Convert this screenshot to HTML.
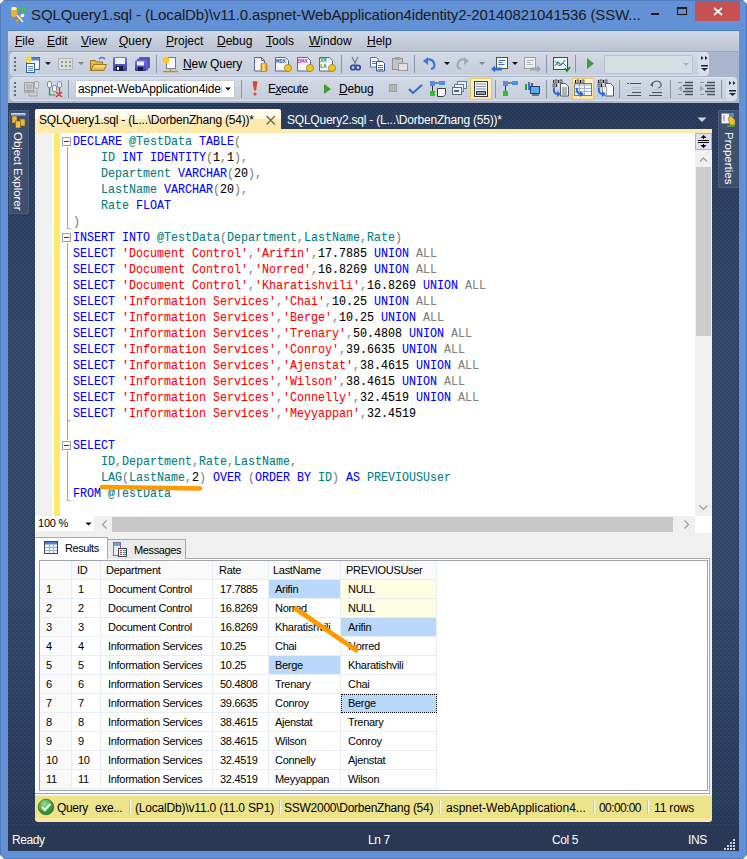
<!DOCTYPE html>
<html><head><meta charset="utf-8">
<style>
*{margin:0;padding:0;box-sizing:border-box}
html,body{width:747px;height:859px;overflow:hidden}
body{position:relative;background:#6391d5;font-family:"Liberation Sans",sans-serif;font-size:12px;color:#000}
.a{position:absolute}
#title{left:31px;top:6px;font-size:15px;letter-spacing:-0.12px;color:#1a1a1a;white-space:nowrap}
#client{left:8px;top:31px;width:731px;height:820px;background:#293955;box-shadow:0 -1px 0 #5080c4}
#menubar{left:8px;top:31px;width:731px;height:20px;background:linear-gradient(#d3d9e4,#b9c2d3)}
#menubar span{position:absolute;top:3px;font-size:12px;white-space:nowrap}
#tbarea{left:8px;top:52px;width:731px;height:50px;background:#c5cddb}
.tb{position:absolute;background:#cfd6e5;border-radius:3px;border:1px solid #e3e7ef;border-right-color:#b9c2d3;border-bottom-color:#b9c2d3}
#editor{left:35px;top:133px;width:677px;height:383px;background:#fff}
#gutter{left:35px;top:133px;width:17px;height:383px;background:#f0f0f0}
#chg{left:54px;top:133px;width:6px;height:383px;background:#ffe965}
#code{left:73px;top:134px;font-family:"Liberation Mono",monospace;font-size:13.5px;line-height:16px;white-space:pre;transform:scaleX(0.86407);transform-origin:0 0;width:800px;height:384px;-webkit-text-stroke:0.1px}
.cl{position:absolute;left:0;height:16px;white-space:pre}
.cl b{font-weight:normal}
.k{color:#0000ff}.i{color:#008080}.p{color:#808080}.s{color:#ff0000}
#vscroll{left:695px;top:133px;width:17px;height:383px;background:#f0f0f0}
#hstrip{left:35px;top:516px;width:677px;height:17px;background:#f0f0f0}
#results{left:35px;top:533px;width:677px;height:263px;background:#f0f0f0}
#grid{left:39px;top:560px;width:669px;height:231px;background:#fff;border:1px solid #a0a4ae}
.gr{position:absolute;left:0;height:19px;width:397px}
.gr span{position:absolute;top:0;height:19px;line-height:19px;font-size:11px;letter-spacing:-0.3px;white-space:nowrap;padding-left:6px;border-right:1px solid #e8eef6;border-bottom:1px solid #e8eef6}
.gr .c0{left:0;width:32px;background:#f9f9f9;padding-left:6px}
.gr .c1{left:32px;width:29px;padding-left:6px}
.gr .c2{left:61px;width:112px;padding-left:7px}
.gr .c3{left:173px;width:56px;padding-left:7px}
.gr .c4{left:229px;width:72px;padding-left:6px}
.gr .c5{left:301px;width:96px;padding-left:7px}
.gh span{background:#f9f9fa!important;padding-left:5px!important}
.gh .c1{padding-left:5px!important}.gh .c3{padding-left:6px!important}.gh .c4{padding-left:4px!important}
.hb{background:#bad9fa!important}.hy{background:#fdfde4!important}
.fc{outline:1px dotted #000;outline-offset:-1px}
#status{left:35px;top:796px;width:677px;height:26px;background:linear-gradient(#ede38a 0,#ede38a 84%,#fde6a2 84%,#fde6a2 100%);border-radius:0 0 3px 3px}
#statusbar span{position:absolute;color:#fff;font-size:12px;letter-spacing:-0.4px;top:833px}
</style></head><body>
<div class="a" id="client"></div>
<svg class="a" style="left:8px;top:102px" width="731" height="724"><defs><linearGradient id="envg" x1="0" y1="0" x2="0" y2="1"><stop offset="0" stop-color="#293955"/><stop offset="0.3" stop-color="#35496a"/><stop offset="0.7" stop-color="#35496a"/><stop offset="1" stop-color="#293955"/></linearGradient><pattern id="dots" width="4" height="4" patternUnits="userSpaceOnUse"><rect x="0" y="2" width="1" height="1" fill="#374b6d"/><rect x="2" y="0" width="1" height="1" fill="#374b6d"/><rect x="2" y="3" width="1" height="1" fill="#25344f"/><rect x="0" y="1" width="1" height="1" fill="#25344f"/></pattern></defs><rect width="731" height="724" fill="url(#envg)"/><rect width="731" height="724" fill="url(#dots)"/></svg>
<div class="a" style="left:9px;top:110px;width:20px;height:104px;background:#3e4f70;border:1px solid #4a5d80;border-radius:1px"></div>
<svg class="a" style="left:10px;top:112px" width="17" height="16">
<rect x="1" y="1" width="15" height="3" fill="#5b8ee0"/><rect x="1" y="1" width="14" height="1.5" fill="#c8d8f0"/>
<rect x="2" y="4" width="5" height="7" fill="#e8b83a" stroke="#7a5a10" stroke-width="0.6"/>
<rect x="10" y="7" width="5" height="7" fill="#e8b83a" stroke="#7a5a10" stroke-width="0.6"/>
<rect x="5.5" y="9" width="5" height="7" fill="#f0c040" stroke="#7a5a10" stroke-width="0.6"/>
</svg>
<div class="a" style="left:9px;top:132px;width:18px;height:82px;writing-mode:vertical-rl;font-size:11.6px;color:#fff;letter-spacing:-0.1px;line-height:18px;white-space:nowrap">Object Explorer</div>
<div class="a" style="left:718px;top:110px;width:21px;height:78px;background:#3e4f70;border:1px solid #4a5d80;border-right:none"></div>
<svg class="a" style="left:721px;top:112px" width="15" height="16">
<rect x="0.5" y="1.5" width="8" height="10" fill="#f4f6fa" stroke="#8090a8" stroke-width="0.8"/>
<path d="M2 4h2M2 6h2M2 8h2" stroke="#6080b0"/>
<rect x="8" y="1" width="5" height="4" fill="#5a8ad8"/>
<path d="M7 6l3-2 4 4v5h-5z" fill="#f0c030" stroke="#8a6a10" stroke-width="0.6"/>
<rect x="6" y="13" width="8" height="2" fill="#3aa040"/>
</svg>
<div class="a" style="left:719px;top:132px;width:19px;height:54px;writing-mode:vertical-rl;font-size:11.5px;color:#fff;line-height:19px;white-space:nowrap">Properties</div>
<div class="a" id="title">SQLQuery1.sql - (LocalDb)\v11.0.aspnet-WebApplication4identity2-20140821041536 (SSW...</div>
<div class="a" style="left:695px;top:1px;width:45px;height:20px;background:#c75050"></div>
<svg class="a" style="left:0;top:0" width="747" height="30">
<path d="M714 8l8 7M722 8l-8 7" stroke="#fff" stroke-width="1.7"/>
<rect x="651" y="13" width="8" height="2" fill="#1a1a1a"/>
<rect x="677.5" y="7.5" width="9" height="7" fill="none" stroke="#1a1a1a" stroke-width="1.1"/><rect x="677" y="7" width="10" height="2" fill="#1a1a1a"/>

<rect x="11" y="7" width="6" height="10" rx="2" fill="#e8b030"/><rect x="11.5" y="7" width="5" height="3" rx="1.5" fill="#fff0b0"/>
<g fill="#3ad040"><rect x="18" y="8" width="1" height="1"/><rect x="20" y="8" width="1" height="1"/><rect x="22" y="8" width="1" height="1"/><rect x="24" y="8" width="1" height="1"/><rect x="24" y="10" width="1" height="1"/><rect x="24" y="12" width="1" height="1"/><rect x="11" y="18" width="1" height="1"/><rect x="11" y="20" width="1" height="1"/><rect x="11" y="22" width="1" height="1"/><rect x="13" y="22" width="1" height="1"/></g>
<path d="M16 22l7-7" stroke="#d8a020" stroke-width="1.8"/><path d="M17 15l6 7" stroke="#f0f0f0" stroke-width="1.5"/><circle cx="22.5" cy="15.5" r="1.8" fill="#fff"/>
</svg>
<div class="a" id="menubar">
<span style="left:7px"><u>F</u>ile</span>
<span style="left:39px"><u>E</u>dit</span>
<span style="left:73px"><u>V</u>iew</span>
<span style="left:111px"><u>Q</u>uery</span>
<span style="left:158px"><u>P</u>roject</span>
<span style="left:209px"><u>D</u>ebug</span>
<span style="left:258px"><u>T</u>ools</span>
<span style="left:301px"><u>W</u>indow</span>
<span style="left:359px"><u>H</u>elp</span>
</div>
<svg class="a" style="left:0;top:0" width="747" height="103">
<defs>
<linearGradient id="tbg" x1="0" y1="0" x2="0" y2="1"><stop offset="0" stop-color="#d3d9e5"/><stop offset="1" stop-color="#c5cddb"/></linearGradient>
<linearGradient id="fold" x1="0" y1="0" x2="0" y2="1"><stop offset="0" stop-color="#fde9a0"/><stop offset="1" stop-color="#e0a830"/></linearGradient>
<linearGradient id="cyl" x1="0" y1="0" x2="1" y2="0"><stop offset="0" stop-color="#c88a10"/><stop offset="0.4" stop-color="#ffe27a"/><stop offset="1" stop-color="#d09018"/></linearGradient>
<linearGradient id="disk" x1="0" y1="0" x2="0" y2="1"><stop offset="0" stop-color="#7878e0"/><stop offset="1" stop-color="#3838a8"/></linearGradient>
<linearGradient id="hl" x1="0" y1="0" x2="0" y2="1"><stop offset="0" stop-color="#fff6d0"/><stop offset="1" stop-color="#ffe49a"/></linearGradient>
</defs>
<!-- toolbar area background -->
<rect x="8" y="52" width="731" height="51" fill="#a9b5ca"/>
<rect x="8" y="51" width="731" height="1" fill="#9ba7bc"/>
<!-- toolbar 1 -->
<rect x="10.5" y="52.5" width="698" height="23" rx="3" fill="url(#tbg)" stroke="#dde2ec"/>
<rect x="698" y="53" width="10" height="22" rx="2" fill="#d8dde8"/>
<!-- toolbar 2 -->
<rect x="10.5" y="77.5" width="726" height="23" rx="3" fill="url(#tbg)" stroke="#dde2ec"/>
<rect x="726" y="78" width="10" height="22" rx="2" fill="#d8dde8"/>
<!-- grips -->
<g fill="#5f6e88">
<rect x="14" y="57" width="2" height="2"/><rect x="14" y="61" width="2" height="2"/><rect x="14" y="65" width="2" height="2"/><rect x="14" y="69" width="2" height="2"/>
<rect x="14" y="82" width="2" height="2"/><rect x="14" y="86" width="2" height="2"/><rect x="14" y="90" width="2" height="2"/><rect x="14" y="94" width="2" height="2"/>
</g>
<!-- separators -->
<g stroke="#8794aa" stroke-width="1">
<path d="M156.5 55v18M341.5 55v18M414.5 55v18M546.5 55v18M575.5 55v18"/>
<path d="M68.5 80v18M241.5 80v18M495.5 80v18M546.5 80v18M619.5 80v18M670.5 80v18M721.5 80v18"/>
</g>
<!-- overflow chevrons -->
<g fill="#1a2540">
<path d="M701 56l2.5 2-2.5 2zM705 56l2.5 2-2.5 2z"/><rect x="701" y="65" width="7" height="1.5"/><path d="M701 68h7l-3.5 3z"/>
<path d="M729 81l2.5 2-2.5 2zM733 81l2.5 2-2.5 2z"/><rect x="729" y="90" width="7" height="1.5"/><path d="M729 93h7l-3.5 3z"/>
</g>
<!-- new project -->
<rect x="26.5" y="57.5" width="13" height="12" fill="#f4f7fc" stroke="#4a6aa8"/><rect x="27" y="58" width="12" height="2.5" fill="#4d86e0"/>
<circle cx="28.5" cy="59.5" r="3.2" fill="#ffd93a"/>
<rect x="26.5" y="63.5" width="8" height="9" fill="#fff" stroke="#3a5aa0"/><path d="M28 66.5h5M28 68.5h5M28 70.5h5" stroke="#4a78d0" stroke-width="0.9"/>
<path d="M45 62h6l-3 3z" fill="#111"/>
<!-- disabled icon -->
<rect x="58.5" y="58.5" width="14" height="11" fill="#dcdcdc" stroke="#b4b4b4"/><g fill="#9a9a9a"><rect x="61" y="61" width="2" height="2"/><rect x="65" y="61" width="2" height="2"/><rect x="69" y="61" width="2" height="2"/><rect x="61" y="65" width="2" height="2"/><rect x="65" y="65" width="2" height="2"/><rect x="69" y="65" width="2" height="2"/></g>
<path d="M78 62h6l-3 3z" fill="#7c8596"/>
<!-- folder -->
<path d="M90.5 60.5h5l1 1.5h6v8.5h-12z" fill="#e8b840" stroke="#9a7420"/>
<path d="M91 70.5l2.5-6h13l-2.5 6z" fill="url(#fold)" stroke="#a07a20"/>
<path d="M99 59q3-3 6 0" fill="none" stroke="#4a6eb0" stroke-width="1.3"/>
<!-- save -->
<rect x="113" y="57" width="14" height="14" rx="1" fill="url(#disk)"/><rect x="115" y="58" width="10" height="6" fill="#f0f0f8"/><rect x="116" y="66" width="7" height="5" fill="#1a1a40"/><rect x="117" y="67" width="2" height="3" fill="#fff"/>
<!-- save all -->
<rect x="139" y="57" width="11" height="11" rx="1" fill="#5a5ac8"/><rect x="137" y="59" width="11" height="11" rx="1" fill="#6464d0" stroke="#3a3aa0" stroke-width="0.6"/><rect x="135" y="60.5" width="11" height="10.5" rx="1" fill="url(#disk)"/><rect x="137" y="61.5" width="7" height="4" fill="#f0f0f8"/><rect x="138" y="67" width="5" height="4" fill="#1a1a40"/>
<!-- new query icon -->
<rect x="166.5" y="57.5" width="9" height="11" fill="#fafafa" stroke="#6a7a98"/><circle cx="166" cy="60" r="3.2" fill="#ffc72a"/><path d="M163 71.5h15" stroke="#c8901a" stroke-width="1.5"/><path d="M170.5 68.5v3" stroke="#c8901a" stroke-width="1.5"/>
<!-- doc + cylinder -->
<path d="M254.5 57.5h7l3 3v10.5h-10z" fill="#f4f6fb" stroke="#5a6a88"/><path d="M261.5 57.5v3h3" fill="none" stroke="#5a6a88"/><rect x="261" y="63" width="6" height="8.5" rx="1.5" fill="url(#cyl)" stroke="#9a6a10" stroke-width="0.6"/>
<!-- MDX DMX XMLA -->
<g font-family="Liberation Mono" font-size="5.5" font-weight="bold">
<path d="M275.5 57.5h10l3 3v10.5h-13z" fill="#f4f6fb" stroke="#5a6a88"/><text x="276" y="63" fill="#2a5ab8">MDX</text><circle cx="288" cy="68" r="3.6" fill="#f2c51a" stroke="#8a6a10" stroke-width="0.6"/>
<path d="M297.5 57.5h10l3 3v10.5h-13z" fill="#f4f6fb" stroke="#5a6a88"/><text x="298" y="63" fill="#c030b0">DMX</text><circle cx="310" cy="68" r="3.6" fill="#f2c51a" stroke="#8a6a10" stroke-width="0.6"/>
<path d="M319.5 57.5h10l3 3v10.5h-13z" fill="#f4f6fb" stroke="#5a6a88"/><text x="320" y="62" fill="#20a050">XM</text><text x="320" y="68" fill="#20a050">LA</text><circle cx="332" cy="68" r="3.6" fill="#f2c51a" stroke="#8a6a10" stroke-width="0.6"/>
</g>
<!-- scissors -->
<path d="M352 57l4 8M358 57l-4 8" stroke="#7a8090" stroke-width="1.3"/><circle cx="353" cy="67.5" r="2.3" fill="none" stroke="#2a4aa0" stroke-width="1.6"/><circle cx="358" cy="67.5" r="2.3" fill="none" stroke="#2a4aa0" stroke-width="1.6"/>
<!-- copy -->
<path d="M370.5 57.5h6l2 2v7.5h-8z" fill="#fff" stroke="#5070b0"/><path d="M372 61.5h4M372 63.5h4" stroke="#3a68c8" stroke-width="0.9"/>
<path d="M376.5 61.5h6l2 2v7.5h-8z" fill="#fff" stroke="#2a4aa0"/><path d="M378 65.5h5M378 67.5h5M378 69.5h5" stroke="#3a68c8" stroke-width="0.9"/>
<!-- paste gray -->
<rect x="392.5" y="58.5" width="10" height="11" fill="#c4c4c4" stroke="#909090"/><rect x="395" y="57" width="5" height="3" fill="#a0a0a0"/><rect x="398.5" y="63.5" width="9" height="7" fill="#e0e0e0" stroke="#999"/>
<!-- undo -->
<path d="M426 60q6-2 8 3t-3 6" fill="none" stroke="#3a78e0" stroke-width="2.2"/><path d="M423 61l5-4v8z" fill="#3a78e0"/>
<path d="M444 62h6l-3 3z" fill="#111"/>
<!-- redo gray -->
<path d="M466 60q-6-2-8 3t3 6" fill="none" stroke="#a4a8b0" stroke-width="2.2"/><path d="M469 61l-5-4v8z" fill="#a4a8b0"/>
<path d="M479 62h6l-3 3z" fill="#7c8596"/>
<!-- nav back -->
<rect x="496.5" y="57.5" width="11" height="11" fill="#fafafa" stroke="#505050"/><path d="M498.5 60.5h7M498.5 62.5h4M498.5 64.5h6" stroke="#2a5ad0" stroke-width="0.9"/><path d="M491 69l4-3.5v2h7v3h-7v2z" fill="#2a70e0"/>
<path d="M512 62h6l-3 3z" fill="#111"/>
<!-- nav fwd gray -->
<rect x="524.5" y="57.5" width="11" height="11" fill="#eeeeee" stroke="#a0a0a0"/><path d="M526.5 60.5h7M526.5 62.5h4M526.5 64.5h6" stroke="#a8acb4" stroke-width="0.9"/><path d="M541 69l-4-3.5v2h-7v3h7v2z" fill="#a0a4ac"/>
<!-- chart -->
<rect x="553.5" y="57.5" width="14" height="12" fill="#f0f4fa" stroke="#404860"/><path d="M555 66l3-4 3 3 4-5" fill="none" stroke="#2aa040" stroke-width="1.2"/><path d="M555 61l4 5 4-3 3 3" fill="none" stroke="#3a78e0" stroke-width="1"/><path d="M565 68l2 3 3-4" stroke="#1a8a30" stroke-width="1.6" fill="none"/>
<!-- play -->
<path d="M587 58l7 5.5-7 5.5z" fill="#3aa030"/>
<!-- disabled combo -->
<rect x="604.5" y="55.5" width="88" height="18" rx="1" fill="#d6dce6" stroke="#b8c0ce"/><path d="M683 63h6l-3 3z" fill="#a8b0bc"/>

<!-- TOOLBAR 2 -->
<!-- gray computer -->
<rect x="24.5" y="82.5" width="9" height="8" fill="#d0d0d0" stroke="#a0a0a0"/><rect x="26" y="84" width="6" height="5" fill="#b8b8b8"/><rect x="24" y="91" width="11" height="2" fill="#b0b0b0"/><rect x="34.5" y="81.5" width="4" height="7" rx="1.5" fill="#e0e0e0" stroke="#a8a8a8"/><path d="M29 93v3h8v-6" fill="none" stroke="#a0a0a0"/>
<!-- db connect -->
<g fill="#f0f4f8" stroke="#6a7a90" stroke-width="0.8"><rect x="47.5" y="81.5" width="4" height="6" rx="1.5"/><rect x="52.5" y="85.5" width="4" height="6" rx="1.5"/><rect x="57.5" y="81.5" width="4" height="6" rx="1.5"/></g>
<path d="M49.5 88v7h6" fill="none" stroke="#2a9a30" stroke-width="1.2"/><path d="M59.5 88v5" stroke="#d03020" stroke-width="1.2"/><path d="M56 92l6 5M62 92l-6 5" stroke="#e83020" stroke-width="1.5"/>
<!-- main combo -->
<rect x="75.5" y="80.5" width="159" height="17" fill="#fff" stroke="#c5ccd8"/><path d="M225 87.5h6l-3 3z" fill="#111"/>
<!-- red ! -->
<path d="M252.5 81.5q2.5-1 5 0l-1.5 9h-2z" fill="#e04820"/><circle cx="255" cy="94" r="1.6" fill="#e04820"/>
<!-- play green -->
<path d="M324 84l7 5-7 5z" fill="#3aa030"/>
<!-- stop gray -->
<rect x="389" y="84" width="8" height="8" fill="#a0a0a0"/><rect x="390" y="85" width="6" height="6" fill="#b4b4b4"/>
<!-- check -->
<path d="M409 89l4 4 9-8" fill="none" stroke="#3a68c8" stroke-width="2"/>
<!-- icon A -->
<rect x="430" y="81" width="5" height="5" fill="#4a90e8"/><rect x="439" y="81" width="6" height="4" fill="#4a90e8"/><path d="M435 83h4" stroke="#333"/><rect x="430" y="91" width="5" height="5" fill="#30c030"/><path d="M432.5 86v5" stroke="#333"/><path d="M437.5 88.5h8v6l-2 2h-6z" fill="#f8f8f8" stroke="#404040"/>
<!-- icon B -->
<rect x="457.5" y="81.5" width="9" height="7" fill="#e8eef8" stroke="#6a7a98"/><rect x="454.5" y="84.5" width="9" height="7" fill="#eef2f8" stroke="#6a7a98"/><rect x="452.5" y="87.5" width="9" height="7" fill="#f4f6fa" stroke="#5a6a88"/><rect x="454" y="90" width="5" height="2" fill="#4060a0"/>
<!-- highlighted C -->
<rect x="470.5" y="78.5" width="21" height="21" fill="url(#hl)" stroke="#e5c365"/>
<rect x="474.5" y="81.5" width="13" height="15" fill="#f4f6fa" stroke="#303850"/><path d="M476 84h10M476 86.5h10M476 89h10" stroke="#6a7890" stroke-width="0.8"/><rect x="476" y="91" width="10" height="4" fill="#303850"/><path d="M477 93h8" stroke="#fff"/>
<!-- icon D -->
<rect x="503" y="81" width="5" height="5" fill="#4a90e8"/><rect x="512" y="81" width="6" height="4" fill="#4a90e8"/><path d="M508 83h4" stroke="#333"/><rect x="503" y="91" width="5" height="5" fill="#30c030"/><path d="M505.5 86v5" stroke="#333"/>
<!-- icon E -->
<rect x="525" y="84" width="2" height="6" fill="#30a030"/><rect x="528" y="82" width="2" height="8" fill="#3a70d0"/><rect x="531" y="83" width="2" height="7" fill="#c03030"/><rect x="530.5" y="86.5" width="9" height="7" fill="#60a8f0" stroke="#204080"/><rect x="532" y="94" width="7" height="2" fill="#707880"/>
<!-- icons F G H with highlight -->
<rect x="572.5" y="78.5" width="21" height="21" fill="url(#hl)" stroke="#e5c365"/>
<g fill="#303030">
<g id="bin"><rect x="553" y="80" width="1" height="3"/><rect x="555" y="80" width="2" height="3" fill="none" stroke="#303030" stroke-width="0.7"/><rect x="558" y="80" width="1" height="3"/><rect x="560" y="80" width="2" height="3" fill="none" stroke="#303030" stroke-width="0.7"/><rect x="553" y="84" width="2" height="3" fill="none" stroke="#303030" stroke-width="0.7"/><rect x="556" y="84" width="1" height="3"/></g>
</g>
<use href="#bin" x="22"/><use href="#bin" x="45"/>
<path d="M560.5 83.5h5l3 3v9.5h-8z" fill="#fafafa" stroke="#505860"/><path d="M562 88h5M562 90h5M562 92h5M562 94h5" stroke="#404850" stroke-width="0.8"/>
<path d="M554 88q-1 6 4 6" fill="none" stroke="#2a6ae0" stroke-width="2"/><path d="M557 91l4 3-4 3z" fill="#2a6ae0"/>
<rect x="574.5" y="83.5" width="17" height="12" fill="#f4f8fc" stroke="#6a7890"/><rect x="575" y="84" width="16" height="2" fill="#c8d4e4"/><path d="M575 88.5h16M575 91.5h16M579.5 84v11M584.5 84v11" stroke="#8aa0c0" stroke-width="0.8"/>
<path d="M577 88q-1 6 4 6" fill="none" stroke="#2a6ae0" stroke-width="2"/><path d="M580 91l4 3-4 3z" fill="#2a6ae0"/>
<path d="M605.5 83.5h5l3 3v9.5h-8z" fill="#fafafa" stroke="#505860"/><path d="M602.5 86.5h4v9h-4z" fill="#f0f0f0" stroke="#707070" stroke-width="0.6"/>
<path d="M599 88q-1 6 4 6" fill="none" stroke="#2a6ae0" stroke-width="2"/><path d="M602 91l4 3-4 3z" fill="#2a6ae0"/>
<!-- comment / uncomment -->
<g stroke="#4a4f5a" stroke-width="1.2">
<path d="M630 83.5h11M632 92.5h9M627 95.5h14"/>
<path d="M652 92.5h10M649 95.5h13"/>
</g>
<path d="M627 83.5h2" stroke="#4a4f5a" stroke-width="1.2"/>
<path d="M632 87.5h9M632 89.5h9" stroke="#b8bcc4" stroke-width="0.8"/>
<path d="M652 84q2-3 5-3t4 3-3 4" fill="none" stroke="#5a5f6a" stroke-width="1.2"/><path d="M650 85l3-3v5z" fill="#5a5f6a"/>
<path d="M654 89.5h8" stroke="#b8bcc4" stroke-width="0.8"/>
<!-- outdent / indent -->
<g stroke="#4a4f5a" stroke-width="1.5">
<path d="M685 82.5h8M683 85.5h10M685 88.5h8M683 91.5h10M685 94.5h8"/>
<path d="M707 82.5h8M705 85.5h10M707 88.5h8M705 91.5h10M707 94.5h8"/>
</g>
<path d="M678 88.5l4-3v6z" fill="#a0a4ac"/><path d="M704 88.5l-4-3v6z" fill="#a0a4ac"/>
<g stroke="#8a8f9a" stroke-width="1"><path d="M678 82.5h4M678 94.5h4M700 82.5h4M700 94.5h4"/></g>
</svg>

<div class="a" style="left:183px;top:57px;font-size:12px;letter-spacing:-0.1px;white-space:nowrap"><u>N</u>ew Query</div>
<div class="a" style="left:78px;top:82px;font-size:12px;letter-spacing:-0.12px;white-space:nowrap;width:144px;overflow:hidden">aspnet-WebApplication4identity2</div>
<div class="a" style="left:268px;top:82px;font-size:12px;letter-spacing:-0.5px;white-space:nowrap">E<u>x</u>ecute</div>
<div class="a" style="left:339px;top:82px;font-size:12px;letter-spacing:-0.2px;white-space:nowrap"><u>D</u>ebug</div>

<div class="a" style="left:35px;top:109px;width:246px;height:21px;border-radius:2px 2px 0 0;background:linear-gradient(#fffcf2 0,#fff8e4 45%,#ffeab0 50%,#ffe9ad 100%)"></div>
<div class="a" style="left:39px;top:113px;font-size:12px;letter-spacing:-0.22px;white-space:nowrap;color:#000">SQLQuery1.sql - (L...\DorbenZhang (54))*</div>
<svg class="a" style="left:265px;top:115px" width="12" height="10"><path d="M1.5 1l8.5 8.5M10 1L1.5 9.5" stroke="#6b6850" stroke-width="1.4"/></svg>
<div class="a" style="left:287px;top:113px;font-size:12px;letter-spacing:-0.22px;white-space:nowrap;color:#fff">SQLQuery2.sql - (L...\DorbenZhang (55))*</div>
<svg class="a" style="left:697px;top:116px" width="11" height="8"><path d="M0.5 1.5h9l-4.5 4.5z" fill="#ced4df"/></svg>
<div class="a" style="left:35px;top:129px;width:677px;height:4px;background:#ffeaae"></div>
<div class="a" id="editor"></div>
<div class="a" id="gutter"></div>
<div class="a" id="chg"></div>
<svg class="a" style="left:59px;top:132px" width="14" height="384">
<g fill="#fff" stroke="#a0a0a0" stroke-width="1">
<rect x="3.5" y="5.5" width="8" height="8"/>
<rect x="3.5" y="101.5" width="8" height="8"/>
<rect x="3.5" y="309.5" width="8" height="8"/>
</g>
<g stroke="#404040" stroke-width="1"><path d="M5 9.5h5M5 105.5h5M5 313.5h5"/></g>
<g stroke="#a5a5a5" stroke-width="1" fill="none">
<path d="M8.5 15v81.5h3"/>
<path d="M8.5 111v197M8.5 288.5h3"/>
<path d="M8.5 319v49.5h3"/>
</g>
</svg>
<div class="a" id="code">
<div class="cl" style="top:0px"><b class="k">DECLARE</b> <b class="i">@TestData</b> <b class="k">TABLE</b><b class="p">(</b></div>
<div class="cl" style="top:16px">    <b class="i">ID</b> <b class="k">INT</b> <b class="k">IDENTITY</b><b class="p">(</b>1<b class="p">,</b>1<b class="p">),</b></div>
<div class="cl" style="top:32px">    <b class="i">Department</b> <b class="k">VARCHAR</b><b class="p">(</b>20<b class="p">),</b></div>
<div class="cl" style="top:48px">    <b class="i">LastName</b> <b class="k">VARCHAR</b><b class="p">(</b>20<b class="p">),</b></div>
<div class="cl" style="top:64px">    <b class="i">Rate</b> <b class="k">FLOAT</b></div>
<div class="cl" style="top:80px"><b class="p">)</b></div>
<div class="cl" style="top:96px"><b class="k">INSERT</b> <b class="k">INTO</b> <b class="i">@TestData</b><b class="p">(</b><b class="i">Department</b><b class="p">,</b><b class="i">LastName</b><b class="p">,</b><b class="i">Rate</b><b class="p">)</b></div>
<div class="cl" style="top:112px"><b class="k">SELECT</b> <b class="s">'Document Control'</b><b class="p">,</b><b class="s">'Arifin'</b><b class="p">,</b>17.7885 <b class="k">UNION</b> <b class="p">ALL</b></div>
<div class="cl" style="top:128px"><b class="k">SELECT</b> <b class="s">'Document Control'</b><b class="p">,</b><b class="s">'Norred'</b><b class="p">,</b>16.8269 <b class="k">UNION</b> <b class="p">ALL</b></div>
<div class="cl" style="top:144px"><b class="k">SELECT</b> <b class="s">'Document Control'</b><b class="p">,</b><b class="s">'Kharatishvili'</b><b class="p">,</b>16.8269 <b class="k">UNION</b> <b class="p">ALL</b></div>
<div class="cl" style="top:160px"><b class="k">SELECT</b> <b class="s">'Information Services'</b><b class="p">,</b><b class="s">'Chai'</b><b class="p">,</b>10.25 <b class="k">UNION</b> <b class="p">ALL</b></div>
<div class="cl" style="top:176px"><b class="k">SELECT</b> <b class="s">'Information Services'</b><b class="p">,</b><b class="s">'Berge'</b><b class="p">,</b>10.25 <b class="k">UNION</b> <b class="p">ALL</b></div>
<div class="cl" style="top:192px"><b class="k">SELECT</b> <b class="s">'Information Services'</b><b class="p">,</b><b class="s">'Trenary'</b><b class="p">,</b>50.4808 <b class="k">UNION</b> <b class="p">ALL</b></div>
<div class="cl" style="top:208px"><b class="k">SELECT</b> <b class="s">'Information Services'</b><b class="p">,</b><b class="s">'Conroy'</b><b class="p">,</b>39.6635 <b class="k">UNION</b> <b class="p">ALL</b></div>
<div class="cl" style="top:224px"><b class="k">SELECT</b> <b class="s">'Information Services'</b><b class="p">,</b><b class="s">'Ajenstat'</b><b class="p">,</b>38.4615 <b class="k">UNION</b> <b class="p">ALL</b></div>
<div class="cl" style="top:240px"><b class="k">SELECT</b> <b class="s">'Information Services'</b><b class="p">,</b><b class="s">'Wilson'</b><b class="p">,</b>38.4615 <b class="k">UNION</b> <b class="p">ALL</b></div>
<div class="cl" style="top:256px"><b class="k">SELECT</b> <b class="s">'Information Services'</b><b class="p">,</b><b class="s">'Connelly'</b><b class="p">,</b>32.4519 <b class="k">UNION</b> <b class="p">ALL</b></div>
<div class="cl" style="top:272px"><b class="k">SELECT</b> <b class="s">'Information Services'</b><b class="p">,</b><b class="s">'Meyyappan'</b><b class="p">,</b>32.4519</div>
<div class="cl" style="top:288px"></div>
<div class="cl" style="top:304px"><b class="k">SELECT</b></div>
<div class="cl" style="top:320px">    <b class="i">ID</b><b class="p">,</b><b class="i">Department</b><b class="p">,</b><b class="i">Rate</b><b class="p">,</b><b class="i">LastName</b><b class="p">,</b></div>
<div class="cl" style="top:336px">    <b class="i">LAG</b><b class="p">(</b><b class="i">LastName</b><b class="p">,</b>2<b class="p">)</b> <b class="k">OVER</b> <b class="p">(</b><b class="k">ORDER BY</b> <b class="i">ID</b><b class="p">)</b> <b class="k">AS</b> <b class="i">PREVIOUSUser</b></div>
<div class="cl" style="top:352px"><b class="k">FROM</b> <b class="i">@TestData</b></div>

</div>
<svg class="a" style="left:96px;top:480px" width="112" height="14"><path d="M6 7L104 8.5" stroke="#ff9a00" stroke-width="4.5" stroke-linecap="round"/></svg>
<div class="a" id="vscroll"></div>
<div class="a" style="left:695px;top:133px;width:17px;height:17px;background:#dde3ee;border:1px solid #a7b3c7"></div>
<svg class="a" style="left:695px;top:133px" width="17" height="17"><path d="M3 7.5h11M3 9.5h11" stroke="#000" stroke-width="1"/><path d="M8.5 2l-3 3h6z M8.5 15l-3-3h6z" fill="#000"/><path d="M8.5 4v2M8.5 11v2" stroke="#000"/></svg>
<svg class="a" style="left:695px;top:150px" width="17" height="17"><path d="M5 11.5l3.5-3.5 3.5 3.5" fill="none" stroke="#a0a0a0" stroke-width="1.3"/></svg>
<div class="a" style="left:696px;top:167px;width:15px;height:169px;background:#cdcdcd"></div>
<svg class="a" style="left:695px;top:499px" width="17" height="17"><path d="M4.5 6.5l4 4 4-4" fill="none" stroke="#a0a0a0" stroke-width="1.3"/></svg>
<div class="a" id="hstrip"></div>
<div class="a" style="left:35px;top:516px;width:59px;height:15px;background:#fff"></div>
<div class="a" style="left:38px;top:517px;font-size:11px;letter-spacing:-0.2px">100 %</div>
<svg class="a" style="left:84px;top:519px" width="9" height="9"><path d="M1.5 3.5h6l-3 3z" fill="#000"/></svg>
<svg class="a" style="left:96px;top:516px" width="17" height="17"><path d="M10.5 4.5l-4 4 4 4" fill="none" stroke="#a0a0a0" stroke-width="1.3"/></svg>
<div class="a" style="left:112px;top:517px;width:561px;height:15px;background:#c8c8c8"></div>
<svg class="a" style="left:678px;top:516px" width="17" height="17"><path d="M6.5 4.5l4 4-4 4" fill="none" stroke="#a0a0a0" stroke-width="1.3"/></svg>
<div class="a" style="left:695px;top:516px;width:17px;height:17px;background:#fff"></div>
<div class="a" id="results"></div>
<div class="a" style="left:35px;top:558px;width:675px;height:236px;background:#fff;border:1px solid #a9a9a9;border-left:none"></div>
<div class="a" style="left:107px;top:539px;width:79px;height:20px;background:#ebebeb;border:1px solid #a9a9a9;border-bottom:none"></div>
<div class="a" style="left:35px;top:537px;width:73px;height:22px;background:#fff;border:1px solid #a9a9a9;border-left:none;border-bottom:none"></div>
<svg class="a" style="left:43px;top:540px" width="16" height="15">
<rect x="1.5" y="1.5" width="13" height="12" fill="#f4f8fc" stroke="#404858"/>
<rect x="2" y="2" width="12" height="2.5" fill="#4a80d8"/>
<path d="M2 7.5h12M2 10.5h12M6.5 5v8M10.5 5v8" stroke="#9ab0d0" stroke-width="1"/>
</svg>
<div class="a" style="left:65px;top:542px;font-size:11px;letter-spacing:-0.4px;white-space:nowrap">Results</div>
<svg class="a" style="left:112px;top:541px" width="16" height="16">
<rect x="1.5" y="1.5" width="7" height="13" fill="#e8f0f8" stroke="#6a7a98"/>
<rect x="2" y="2" width="6" height="3" fill="#7aa0d0"/>
<rect x="6.5" y="7.5" width="8" height="8" fill="#f8f8f8" stroke="#404870"/>
<path d="M8 9.5h2M8 11.5h2M8 13.5h2" stroke="#e04020" stroke-width="1.2"/><path d="M11 9.5h3M11 11.5h3M11 13.5h3" stroke="#40a040" stroke-width="1.2"/>
</svg>
<div class="a" style="left:134px;top:544px;font-size:11px;letter-spacing:-0.38px;white-space:nowrap">Messages</div>
<div class="a" id="grid">
<div class="gr gh" style="top:0"><span class="c0"></span><span class="c1">ID</span><span class="c2">Department</span><span class="c3">Rate</span><span class="c4">LastName</span><span class="c5">PREVIOUSUser</span></div>
<div class="gr" style="top:19px"><span class="c0">1</span><span class="c1">1</span><span class="c2">Document Control</span><span class="c3">17.7885</span><span class="c4 hb">Arifin</span><span class="c5 hy">NULL</span></div>
<div class="gr" style="top:38px"><span class="c0">2</span><span class="c1">2</span><span class="c2">Document Control</span><span class="c3">16.8269</span><span class="c4">Norred</span><span class="c5 hy">NULL</span></div>
<div class="gr" style="top:57px"><span class="c0">3</span><span class="c1">3</span><span class="c2">Document Control</span><span class="c3">16.8269</span><span class="c4">Kharatishvili</span><span class="c5 hb">Arifin</span></div>
<div class="gr" style="top:76px"><span class="c0">4</span><span class="c1">4</span><span class="c2">Information Services</span><span class="c3">10.25</span><span class="c4">Chai</span><span class="c5">Norred</span></div>
<div class="gr" style="top:95px"><span class="c0">5</span><span class="c1">5</span><span class="c2">Information Services</span><span class="c3">10.25</span><span class="c4 hb">Berge</span><span class="c5">Kharatishvili</span></div>
<div class="gr" style="top:114px"><span class="c0">6</span><span class="c1">6</span><span class="c2">Information Services</span><span class="c3">50.4808</span><span class="c4">Trenary</span><span class="c5">Chai</span></div>
<div class="gr" style="top:133px"><span class="c0">7</span><span class="c1">7</span><span class="c2">Information Services</span><span class="c3">39.6635</span><span class="c4">Conroy</span><span class="c5 hb fc">Berge</span></div>
<div class="gr" style="top:152px"><span class="c0">8</span><span class="c1">8</span><span class="c2">Information Services</span><span class="c3">38.4615</span><span class="c4">Ajenstat</span><span class="c5">Trenary</span></div>
<div class="gr" style="top:171px"><span class="c0">9</span><span class="c1">9</span><span class="c2">Information Services</span><span class="c3">38.4615</span><span class="c4">Wilson</span><span class="c5">Conroy</span></div>
<div class="gr" style="top:190px"><span class="c0">10</span><span class="c1">10</span><span class="c2">Information Services</span><span class="c3">32.4519</span><span class="c4">Connelly</span><span class="c5">Ajenstat</span></div>
<div class="gr" style="top:209px"><span class="c0">11</span><span class="c1">11</span><span class="c2">Information Services</span><span class="c3">32.4519</span><span class="c4">Meyyappan</span><span class="c5">Wilson</span></div>

</div>
<svg class="a" style="left:285px;top:600px" width="80" height="60"><path d="M11 9L71 50" stroke="#ff9a00" stroke-width="5" stroke-linecap="round"/></svg>
<div class="a" id="status"></div>
<svg class="a" style="left:37px;top:798px" width="19" height="19">
<defs><radialGradient id="gc" cx="0.4" cy="0.3" r="0.8"><stop offset="0" stop-color="#9be08a"/><stop offset="0.6" stop-color="#3aa035"/><stop offset="1" stop-color="#1e7a20"/></radialGradient></defs>
<circle cx="9" cy="9" r="7.8" fill="url(#gc)" stroke="#2a7a2a" stroke-width="0.8"/>
<path d="M5 9l2.8 3 5.5-6" fill="none" stroke="#fff" stroke-width="2"/>
</svg>
<div class="a" style="left:57px;top:801px;font-size:12px;letter-spacing:-0.35px;word-spacing:4px;white-space:nowrap">Query exe...</div>
<div class="a" style="left:129px;top:800px;width:2px;height:14px;background:#fff;border-left:1px solid #c4c4cc"></div>
<div class="a" style="left:135px;top:801px;font-size:12px;letter-spacing:-0.18px;white-space:nowrap">(LocalDb)\v11.0 (11.0 SP1)</div>
<div class="a" style="left:279px;top:800px;width:2px;height:14px;background:#fff;border-left:1px solid #c4c4cc"></div>
<div class="a" style="left:284px;top:801px;font-size:12px;letter-spacing:-0.26px;white-space:nowrap">SSW2000\DorbenZhang (54)</div>
<div class="a" style="left:439px;top:800px;width:2px;height:14px;background:#fff;border-left:1px solid #c4c4cc"></div>
<div class="a" style="left:446px;top:801px;font-size:12px;letter-spacing:0px;white-space:nowrap">aspnet-WebApplication4...</div>
<div class="a" style="left:593px;top:800px;width:2px;height:14px;background:#fff;border-left:1px solid #c4c4cc"></div>
<div class="a" style="left:599px;top:801px;font-size:12px;letter-spacing:-0.6px;white-space:nowrap">00:00:00</div>
<div class="a" style="left:647px;top:800px;width:2px;height:14px;background:#fff;border-left:1px solid #c4c4cc"></div>
<div class="a" style="left:654px;top:801px;font-size:12px;letter-spacing:-0.15px;white-space:nowrap">11 rows</div>
<div id="statusbar">
<span style="left:12px">Ready</span>
<span style="left:368px">Ln 7</span>
<span style="left:552px">Col 5</span>
<span style="left:688px">INS</span>
</div>
<svg class="a" style="left:724px;top:838px" width="12" height="12"><g fill="#c8d0e0"><rect x="9" y="1" width="2" height="2"/><rect x="6" y="4" width="2" height="2"/><rect x="9" y="4" width="2" height="2"/><rect x="3" y="7" width="2" height="2"/><rect x="6" y="7" width="2" height="2"/><rect x="9" y="7" width="2" height="2"/><rect x="0" y="10" width="2" height="2"/><rect x="3" y="10" width="2" height="2"/><rect x="6" y="10" width="2" height="2"/><rect x="9" y="10" width="2" height="2"/></g></svg>
<svg class="a" style="left:0;top:0" width="747" height="859"><rect x="0.5" y="0.5" width="746" height="858" fill="none" stroke="#527dbd"/><path d="M0 0h4l-4 4z" fill="#fff"/><path d="M747 0h-4l4 4z" fill="#fff"/><path d="M0 859h4l-4-4z" fill="#fff"/><path d="M747 859h-4l4-4z" fill="#fff"/></svg>
</body></html>
